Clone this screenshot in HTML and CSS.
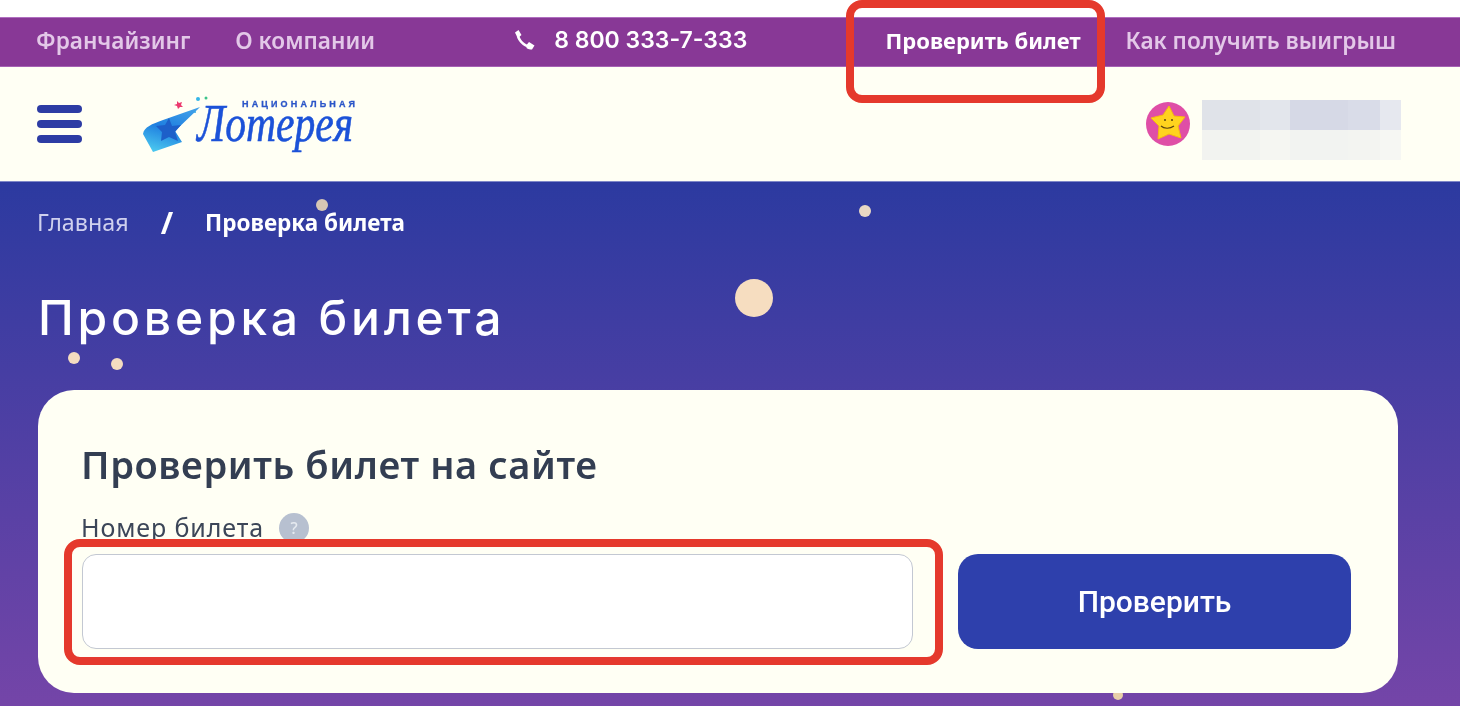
FILE: index.html
```html
<!DOCTYPE html>
<html lang="ru">
<head>
<meta charset="utf-8">
<title>Проверка билета</title>
<link rel="stylesheet" href="styles.css">
</head>
<body>
<div class="page">
  <div class="topbar">
    <nav class="top-group">
      <a class="top-link">Франчайзинг</a>
      <a class="top-link">О компании</a>
    </nav>
    <div class="phone">
      <svg class="phone-icon" viewBox="0 0 22 22" aria-hidden="true">
        <path d="M4 3C4 10 9 17 18 18" fill="none" stroke="#fff" stroke-width="2.6"/>
        <path d="M1.5 3.5L5 1l3 5-3 2.500C3.500 7 2 5 1.500 3.500zM13 16l2.500-3 5.500 3.500-2.500 4c-2 0-4-.5-5.500-1.500z" fill="#fff"/>
      </svg>
      <span class="phone-num">8 800 333-7-333</span>
    </div>
    <nav class="top-group">
      <a class="top-link top-link-active">Проверить билет</a>
      <a class="top-link">Как получить выигрыш</a>
    </nav>
  </div>

  <header class="header">
    <div class="burger"><span></span><span></span><span></span></div>
    <svg class="logo" viewBox="0 0 215 60" aria-label="Национальная лотерея">
      <defs>
        <linearGradient id="comet" x1="0.7" y1="0" x2="0.3" y2="1">
          <stop offset="0" stop-color="#3f9fe8"/>
          <stop offset="0.5" stop-color="#1f7fe0"/>
          <stop offset="1" stop-color="#49c5ee"/>
        </linearGradient>
      </defs>
      <path d="M59 13L22 26C11 30 3 33 2 40L12 58 41 48 34 37 56 16z" fill="url(#comet)"/>
      <path d="M28 24l3 8 9-1-6 7 3 9-9-4-8 4 1-9-6-6 9-1z" fill="#1d5fc9"/>
      <path d="M36 7l2 2 3-1-1 3 2 2-3 0-2 2-1-3-3-1 3-1z" fill="#ec3a6f"/>
      <circle cx="57" cy="5" r="2" fill="#35b6e8"/>
      <circle cx="65" cy="4" r="1.500" fill="#3bc48a"/>
      <circle cx="54" cy="18" r="1" fill="#35a6e8"/>
      <text class="logo-top" x="101" y="13" textLength="113">НАЦИОНАЛЬНАЯ</text>
      <text class="logo-main" x="56" y="47" textLength="156" lengthAdjust="spacingAndGlyphs">Лотерея</text>
    </svg>
    <div class="user">
      <svg class="avatar" viewBox="0 0 44 44" aria-hidden="true">
        <circle cx="22" cy="22" r="22" fill="#df4ea6"/>
        <path d="M23 4l5 10 11 1-7 9 3 12-12-4-11 5 1-13-8-8 12-3z" fill="#ffd31e" stroke="#f7b90f" stroke-width="1"/>
        <circle cx="19" cy="18" r="1" fill="#5b4310"/>
        <circle cx="26" cy="18" r="1" fill="#5b4310"/>
        <path d="M15 24c3 3 9 3 13 0" fill="none" stroke="#5b4310" stroke-width="1.200"/>
      </svg>
      <div class="user-blur">
        <i></i><i></i><i></i><i></i><i></i>
        <i></i><i></i><i></i><i></i><i></i>
      </div>
    </div>
  </header>

  <main class="main">
    <div class="crumbs">
      <a class="crumb">Главная</a>
      <span class="crumb-sep">/</span>
      <span class="crumb-current">Проверка билета</span>
    </div>
    <h1 class="title">Проверка билета</h1>
    <section class="card">
      <h2 class="card-title">Проверить билет на сайте</h2>
      <div class="label-row">
        <label class="label" for="ticket">Номер билета</label>
        <span class="hint">?</span>
      </div>
      <div class="form-row">
        <input class="input" id="ticket" type="text">
        <button class="button" type="button">Проверить</button>
      </div>
    </section>
    <span class="dot dot-a"></span>
    <span class="dot dot-b"></span>
    <span class="dot dot-c"></span>
    <span class="dot dot-d"></span>
    <span class="dot dot-e"></span>
    <span class="dot dot-f"></span>
  </main>

  <div class="mark mark-top"></div>
  <div class="mark mark-input"></div>
</div>
</body>
</html>
```
FILE: styles.css
```css
* { box-sizing: border-box; }
html, body { margin: 0; height: 100%; background: #fff; }
body { overflow: hidden; font-family: "Noto Sans", Roboto, sans-serif; }
.page {
  position: relative;
  width: 1460px;
  height: 706px;
  padding-top: 17px;
  overflow: hidden;
  filter: blur(0.5px);
}
.topbar {
  height: 50px;
  display: flex;
  align-items: center;
  justify-content: space-between;
  padding: 0 64px 4px 36px;
  background: #883896;
  border-top: 1px solid #b06fc0;
  border-bottom: 1px solid #a662b4;
}
.top-group { display: flex; gap: 45px; }
.top-link {
  font-size: 22.6px;
  font-weight: 600;
  color: #e3c8e8;
  white-space: nowrap;
}
.top-link-active { font-size: 22px; color: #fff; font-weight: 700; }
.phone { display: flex; align-items: center; gap: 18px; }
.phone-icon { width: 23px; height: 22px; }
.phone-num {
  font-family: Inter, Roboto, sans-serif;
  font-size: 23px;
  font-weight: 600;
  color: #fff;
  white-space: nowrap;
}
.header {
  height: 114px;
  display: flex;
  align-items: center;
  padding: 0 59px 0 37px;
  background: #fffff4;
}
.burger {
  width: 45px;
  display: flex;
  flex-direction: column;
  gap: 7px;
  margin-right: 59px;
}
.burger span {
  height: 8px;
  border-radius: 4px;
  background: #2d3ca4;
}
.logo { width: 215px; height: 60px; overflow: visible; }
.logo-top {
  font-family: "Liberation Sans", sans-serif;
  font-size: 9px;
  font-weight: 700;
  fill: #2a55c8;
  stroke: #2a55c8;
  stroke-width: 0.3px;
}
.logo-main {
  font-family: "Liberation Serif", serif;
  font-size: 52px;
  font-style: italic;
  fill: #1c52d8;
  stroke: #1c52d8;
  stroke-width: 0.6px;
}
.user {
  margin-left: auto;
  align-self: flex-start;
  margin-top: 33px;
  display: flex;
  align-items: flex-start;
  gap: 12px;
}
.avatar { width: 44px; height: 44px; margin-top: 2px; }
.user-blur {
  width: 199px;
  height: 60px;
  display: grid;
  grid-template-columns: 58px 30px 58px 32px 21px;
  grid-template-rows: 30px 30px;
}
.user-blur i:nth-child(1) { background: #e0e3e9; }
.user-blur i:nth-child(2) { background: #e3e6ec; }
.user-blur i:nth-child(3) { background: #d6d9e6; }
.user-blur i:nth-child(4) { background: #d9dce8; }
.user-blur i:nth-child(5) { background: #e6e8ef; }
.user-blur i:nth-child(6) { background: #f2f3f0; }
.user-blur i:nth-child(7) { background: #f5f6f2; }
.user-blur i:nth-child(8) { background: #f2f3f1; }
.user-blur i:nth-child(9) { background: #f3f4f1; }
.user-blur i:nth-child(10) { background: #f6f7f3; }
.main {
  position: relative;
  height: 525px;
  padding: 25px 62px 0 38px;
  background: linear-gradient(180deg, #2c3aa0 0%, #7445a8 100%);
  border-top: 1px solid #7f88c8;
}
.crumbs {
  display: flex;
  align-items: center;
  height: 30px;
  color: #fff;
}
.crumb { font-size: 23.300px; color: #cfd0ee; margin-left: -1px; }
.crumb-sep {
  font-size: 30px;
  font-weight: 700;
  margin: 0 32px;
}
.crumb-current { font-size: 22.500px; font-weight: 700; }
.title {
  margin: 56px 0 0;
  height: 50px;
  font-family: Inter, Lato, sans-serif;
  font-size: 48px;
  line-height: 50px;
  font-weight: 500;
  letter-spacing: 3.8px;
  color: #fff;
}
.card {
  position: relative;
  z-index: 1;
  margin-top: 47px;
  height: 303px;
  padding: 49px 46px 0 43px;
  background: #fffff4;
  border-radius: 36px;
}
.card-title {
  margin: 0;
  height: 50px;
  font-size: 38px;
  line-height: 50px;
  font-weight: 600;
  letter-spacing: 0.6px;
  color: #333e52;
}
.label-row {
  display: flex;
  align-items: center;
  gap: 15px;
  height: 30px;
  margin-top: 23px;
}
.label {
  font-size: 25px;
  letter-spacing: 0.9px;
  color: #3c4658;
}
.hint {
  width: 30px;
  height: 30px;
  margin-top: 2px;
  border-radius: 50%;
  background: #b7c0d0;
  color: #e6eaf0;
  font-size: 16px;
  font-weight: 500;
  line-height: 30px;
  text-align: center;
}
.form-row {
  display: flex;
  gap: 45px;
  margin-top: 12px;
  margin-left: 1px;
}
.input {
  flex: 0 0 831px;
  height: 95px;
  background: #fff;
  border: 1px solid #c3c8d2;
  border-radius: 14px;
}
.button {
  flex: 0 0 393px;
  height: 95px;
  border: 0;
  border-radius: 20px;
  background: #2e40ac;
  color: #fff;
  font-family: Roboto, sans-serif;
  font-size: 30px;
  font-weight: 500;
}
.dot {
  position: absolute;
  border-radius: 50%;
  background: #f4dcc0;
}
.dot-a { left: 316px; top: 17px; width: 12px; height: 12px; background: #d6c6b4; }
.dot-b { left: 859px; top: 23px; width: 12px; height: 12px; background: #e8d8c4; }
.dot-c { left: 735px; top: 97px; width: 38px; height: 38px; background: #f6ddc0; }
.dot-d { left: 68px; top: 170px; width: 12px; height: 12px; }
.dot-e { left: 111px; top: 176px; width: 12px; height: 12px; }
.dot-f { left: 1113px; top: 508px; width: 10px; height: 10px; background: #e8cfa8; }
.mark {
  position: absolute;
  z-index: 5;
  border: 8px solid #e5392c;
  border-radius: 16px;
}
.mark-top { left: 846px; top: 0; width: 259px; height: 103px; }
.mark-input { left: 64px; top: 539px; width: 879px; height: 126px; }
```
